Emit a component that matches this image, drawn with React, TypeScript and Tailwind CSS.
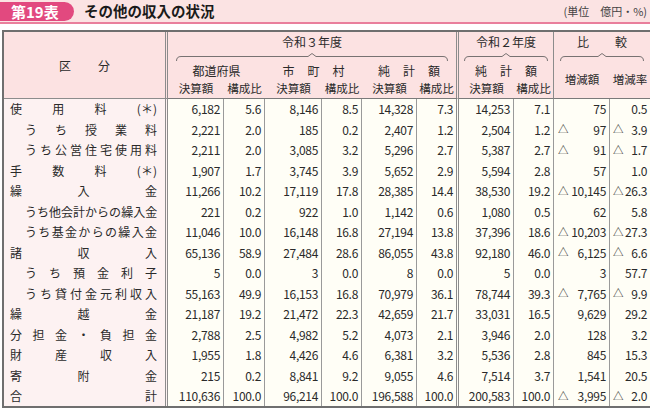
import React from 'react';

const JP = "font-['Noto_Sans_CJK_JP','Noto_Sans',sans-serif]";

type Row = { label: string | string[]; sub?: boolean; v: string[] };

const rows: Row[] = [
  { label: ['使', '用', '料', '(＊)'], v: ['6,182', '5.6', '8,146', '8.5', '14,328', '7.3', '14,253', '7.1', '75', '0.5'] },
  { label: 'うち授業料', sub: true, v: ['2,221', '2.0', '185', '0.2', '2,407', '1.2', '2,504', '1.2', '△97', '△3.9'] },
  { label: 'うち公営住宅使用料', sub: true, v: ['2,211', '2.0', '3,085', '3.2', '5,296', '2.7', '5,387', '2.7', '△91', '△1.7'] },
  { label: ['手', '数', '料', '(＊)'], v: ['1,907', '1.7', '3,745', '3.9', '5,652', '2.9', '5,594', '2.8', '57', '1.0'] },
  { label: '繰入金', v: ['11,266', '10.2', '17,119', '17.8', '28,385', '14.4', '38,530', '19.2', '△10,145', '△26.3'] },
  { label: 'うち他会計からの繰入金', sub: true, v: ['221', '0.2', '922', '1.0', '1,142', '0.6', '1,080', '0.5', '62', '5.8'] },
  { label: 'うち基金からの繰入金', sub: true, v: ['11,046', '10.0', '16,148', '16.8', '27,194', '13.8', '37,396', '18.6', '△10,203', '△27.3'] },
  { label: '諸収入', v: ['65,136', '58.9', '27,484', '28.6', '86,055', '43.8', '92,180', '46.0', '△6,125', '△6.6'] },
  { label: 'うち預金利子', sub: true, v: ['5', '0.0', '3', '0.0', '8', '0.0', '5', '0.0', '3', '57.7'] },
  { label: 'うち貸付金元利収入', sub: true, v: ['55,163', '49.9', '16,153', '16.8', '70,979', '36.1', '78,744', '39.3', '△7,765', '△9.9'] },
  { label: '繰越金', v: ['21,187', '19.2', '21,472', '22.3', '42,659', '21.7', '33,031', '16.5', '9,629', '29.2'] },
  { label: ['分', '担', '金', '・', '負', '担', '金'], v: ['2,788', '2.5', '4,982', '5.2', '4,073', '2.1', '3,946', '2.0', '128', '3.2'] },
  { label: '財産収入', v: ['1,955', '1.8', '4,426', '4.6', '6,381', '3.2', '5,536', '2.8', '845', '15.3'] },
  { label: '寄附金', v: ['215', '0.2', '8,841', '9.2', '9,055', '4.6', '7,514', '3.7', '1,541', '20.5'] },
  { label: '合計', v: ['110,636', '100.0', '96,214', '100.0', '196,588', '100.0', '200,583', '100.0', '△3,995', '△2.0'] },
];

const colWidths = [164, 56, 41, 57, 40, 55, 42, 55, 40, 56, 40];

// brace drawn under a group heading
function Brace({ width }: { width: number }) {
  const mid = width / 2;
  return (
    <svg width={width} height={8} className="block">
      <path
        d={`M0.5 8 Q0.5 3.5 5 3.5 L${mid - 4} 3.5 L${mid} 0.5 L${mid + 4} 3.5 L${width - 5} 3.5 Q${width - 0.5} 3.5 ${width - 0.5} 8`}
        fill="none"
        stroke="#555"
        strokeWidth={0.8}
      />
    </svg>
  );
}

function Label({ text, sub, tall }: { text: string | string[]; sub?: boolean; tall: boolean }) {
  const chars = Array.isArray(text) ? text : Array.from(text);
  return (
    <div className={`flex items-center justify-between pr-[8px] ${tall ? 'h-[21px]' : 'h-[20px]'} ${sub ? 'pl-[21px]' : 'pl-[6px]'}`}>
      {chars.map((c, i) => (
        <span key={i}>{c}</span>
      ))}
    </div>
  );
}

function Num({ value, pct, tall }: { value: string; pct?: boolean; tall: boolean }) {
  const h = tall ? 'h-[21px]' : 'h-[20px]';
  if (value.startsWith('△')) {
    return (
      <div className={`flex items-center justify-between pr-[3px] ${h} ${pct ? 'pl-[3px]' : 'pl-[4px]'}`}>
        <span className="text-[10.5px] leading-none">△</span>
        <span>{value.slice(1)}</span>
      </div>
    );
  }
  return <div className={`flex items-center justify-end pr-[3px] ${h}`}>{value}</div>;
}

function Group({ children, brace }: { children: React.ReactNode; brace: number }) {
  return (
    <div className="h-[30px] flex flex-col items-center pt-[1px]">
      <span className="leading-[17px]">{children}</span>
      <div className="mt-[3px]">
        <Brace width={brace} />
      </div>
    </div>
  );
}

function Spaced({ chars }: { chars: string[] }) {
  return (
    <div className="h-[18px] flex items-center justify-center gap-[13px]">
      {chars.map((c, i) => (
        <span key={i}>{c}</span>
      ))}
    </div>
  );
}

export default function App() {
  return (
    <div className={`w-[650px] h-[409px] overflow-hidden bg-white text-[#2a2a2a] ${JP}`}>
      {/* title bar */}
      <div className="h-[24px] bg-[#fbe3e3] border-b-2 border-[#e97f9c] flex items-center">
        <div className="h-[19px] w-[74px] bg-[#e2497f] rounded-r-full flex items-center pl-[11px] text-white text-[15px] font-bold leading-none">
          第19表
        </div>
        <div className="ml-[10px] text-[14.5px] font-bold leading-none text-[#1a1a1a]">その他の収入の状況</div>
        <div className="ml-auto pr-[3px] text-[11px] text-[#444] leading-none">(単位　億円・%)</div>
      </div>

      <div className="pt-[6px] px-[2px]">
        <table className="table-fixed border-separate border-spacing-0 w-[646px] border-2 border-[#6f6f6f]">
          <colgroup>
            {colWidths.map((w, i) => (
              <col key={i} style={{ width: w }} />
            ))}
          </colgroup>
          <thead className="bg-[#fce2e2] text-[12px]">
            <tr>
              <th rowSpan={3} className="font-normal p-0 border-r-[3px] border-double border-b border-[#8c8c8c] align-middle">
                <div className="flex justify-center gap-[27px] pt-[2px]">
                  <span>区</span>
                  <span>分</span>
                </div>
              </th>
              <th colSpan={6} className="font-normal p-0 align-top border-r-[3px] border-double border-[#8c8c8c]">
                <Group brace={272}>令和３年度</Group>
              </th>
              <th colSpan={2} className="font-normal p-0 align-top border-r border-[#8c8c8c]">
                <Group brace={84}>令和２年度</Group>
              </th>
              <th colSpan={2} className="font-normal p-0 align-top">
                <Group brace={84}>
                  <span className="flex gap-[26px]">
                    <span>比</span>
                    <span>較</span>
                  </span>
                </Group>
              </th>
            </tr>
            <tr>
              <th colSpan={2} className="font-normal p-0">
                <div className="h-[18px] flex items-center justify-center">都道府県</div>
              </th>
              <th colSpan={2} className="font-normal p-0">
                <Spaced chars={['市', '町', '村']} />
              </th>
              <th colSpan={2} className="font-normal p-0 border-r-[3px] border-double border-[#8c8c8c]">
                <Spaced chars={['純', '計', '額']} />
              </th>
              <th colSpan={2} className="font-normal p-0 border-r border-[#8c8c8c]">
                <Spaced chars={['純', '計', '額']} />
              </th>
              <th rowSpan={2} className="font-normal text-[11.5px] p-0 border-b border-[#7a7a7a]">増減額</th>
              <th rowSpan={2} className="font-normal text-[11.5px] p-0 border-b border-[#7a7a7a]">増減率</th>
            </tr>
            <tr className="text-[11.5px]">
              {['決算額', '構成比', '決算額', '構成比', '決算額', '構成比', '決算額', '構成比'].map((t, i) => (
                <th
                  key={i}
                  className={`font-normal p-0 border-b border-[#7a7a7a] ${
                    i === 5 ? 'border-r-[3px] border-double border-r-[#8c8c8c]' : i === 7 ? 'border-r border-r-[#8c8c8c]' : ''
                  }`}
                >
                  <div className="h-[18px] flex items-center justify-center pb-[1px]">{t}</div>
                </th>
              ))}
            </tr>
          </thead>
          <tbody className="text-[12px]">
            {rows.map((r, ri) => {
              const tall = ri % 2 === 1;
              return (
                <tr key={ri}>
                  <td className="bg-[#fdf2f2] p-0 border-r-[3px] border-double border-[#8c8c8c] leading-none">
                    <Label text={r.label} sub={r.sub} tall={tall} />
                  </td>
                  {r.v.map((v, ci) => (
                    <td
                      key={ci}
                      className={`bg-[#fffef6] p-0 leading-none tracking-[-0.3px] ${
                        ci === 5
                          ? 'border-r-[3px] border-double border-[#8c8c8c]'
                          : ci === 9
                          ? ''
                          : 'border-r border-[#9a9a9a]'
                      }`}
                    >
                      <Num value={v} pct={ci === 9} tall={tall} />
                    </td>
                  ))}
                </tr>
              );
            })}
          </tbody>
        </table>
      </div>
    </div>
  );
}
